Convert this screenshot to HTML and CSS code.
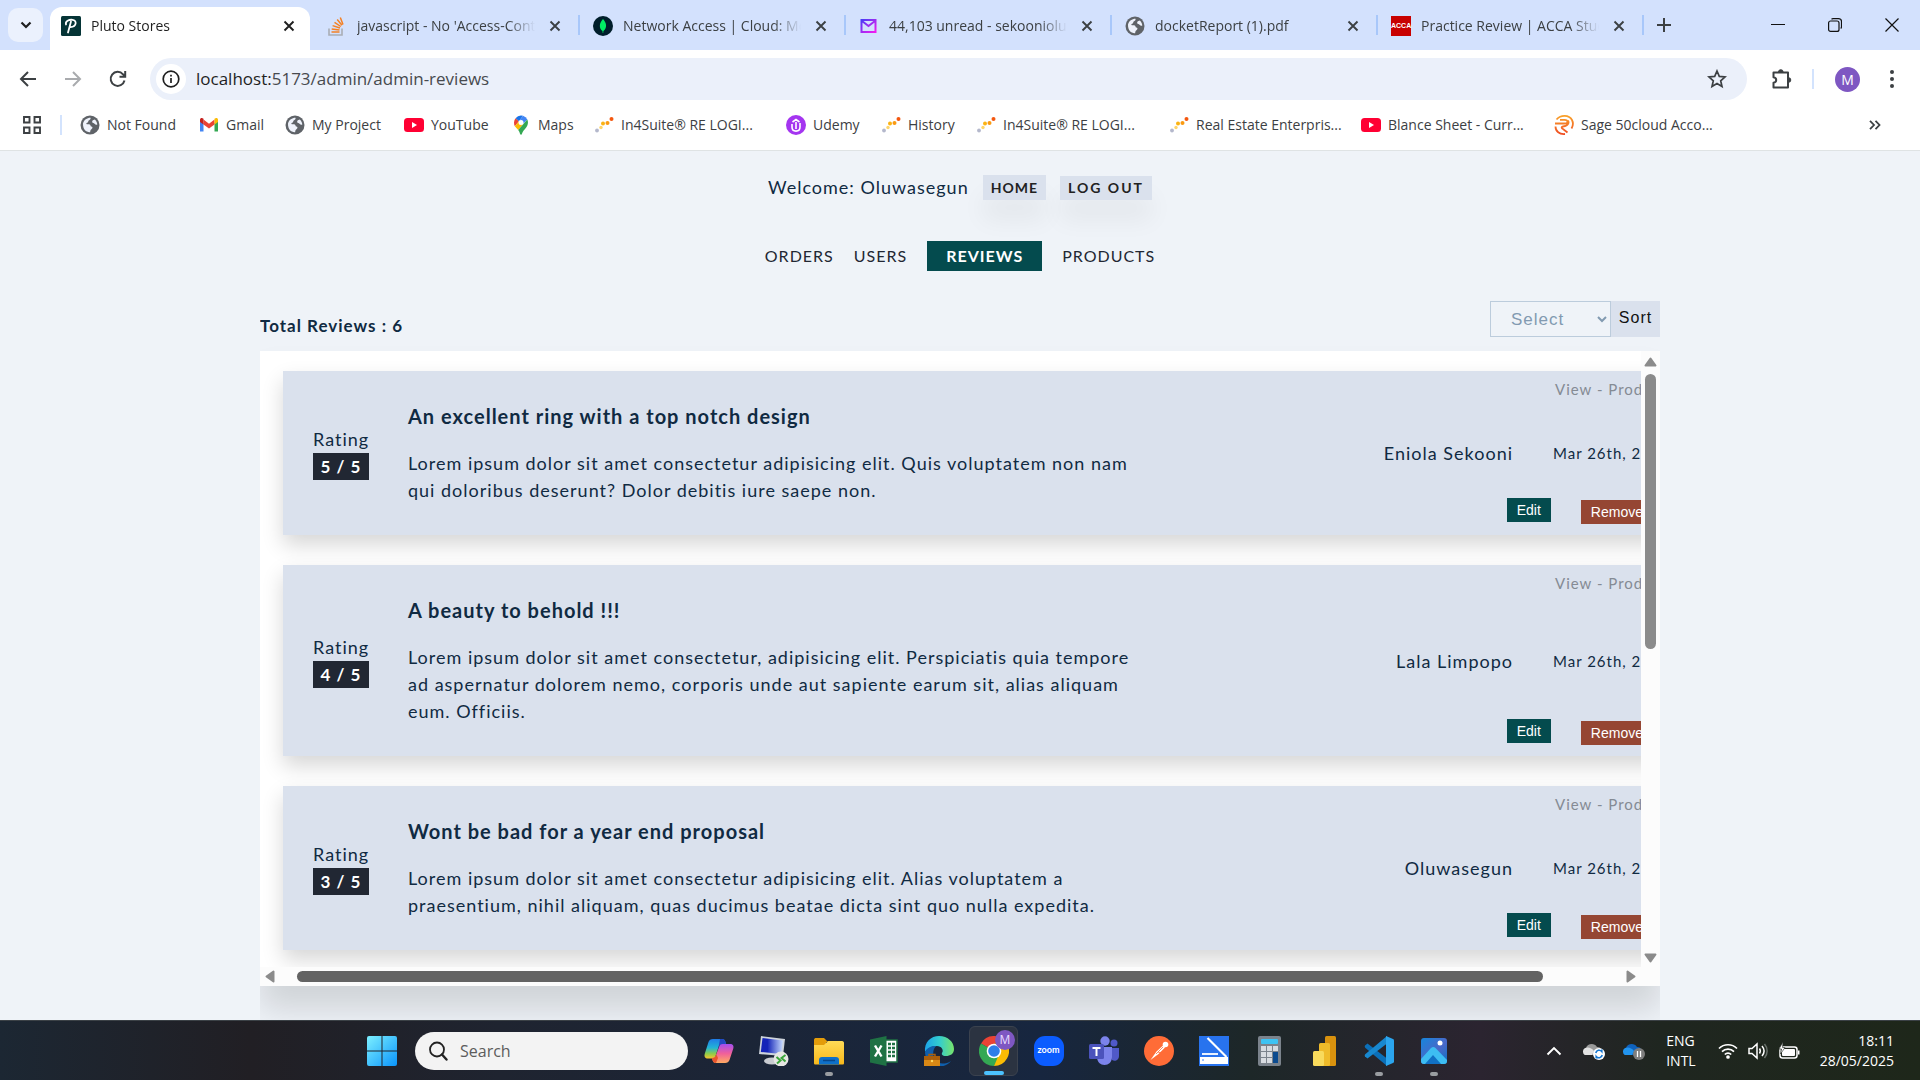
FILE: index.html
```html
<!DOCTYPE html>
<html lang="en">
<head>
<meta charset="utf-8">
<meta name="viewport" content="width=device-width, initial-scale=1">
<title>Pluto Stores</title>
<link rel="stylesheet" href="styles.css">
</head>
<body>
<svg class="defs" aria-hidden="true">
  <defs>
    <symbol id="close" viewBox="0 0 12 12"><path d="M1.5 1.5l9 9M10.500 1.500l-9 9" stroke="currentColor" stroke-width="1.900" fill="none"/></symbol>
    <symbol id="globe" viewBox="0 0 20 20"><circle cx="10" cy="10" r="9.500" fill="#5f6368"/><path d="M3 8.500C4 5 7 2.800 10.500 2.800c.5 1.700-.8 2.200-1.800 2.700-.7.400-.2 1.500-1 1.900-.8.300-1.500.5-1.300 1.300.3.900 2.300.2 3.300.7 1.300.6.500 1.800 1.600 2.200 1.200.4 1.500 1.200.8 2-.9 1-1.800 1.200-2 3.600-4 .2-7.300-3-7.100-8.700zM12.800 5.200l2-.6c1.400 1.300 2.300 3 2.500 4.900-.9.500-2.200 0-2.800-.8-.5-.8-1.900-.6-2.300-1.500-.2-.7 0-1.500.6-2z" fill="#eef2fb"/></symbol>
    <symbol id="youtube" viewBox="0 0 20 20"><rect y="3" width="20" height="14" rx="3.500" fill="#ff0033"/><path d="M8 7v6l5-3z" fill="#fff"/></symbol>
    <symbol id="dots" viewBox="0 0 20 20"><circle cx="3" cy="15.500" r="1.900" fill="#b4b8cc"/><circle cx="7" cy="12.500" r="1.700" fill="#ffd66b"/><circle cx="9" cy="8.500" r="2" fill="#fbb313"/><circle cx="13.500" cy="8" r="2" fill="#fa9a12"/><circle cx="17.500" cy="4" r="2" fill="#f4570f"/></symbol>
    <linearGradient id="win" x1="0" y1="0" x2="1" y2="1"><stop offset="0" stop-color="#7df0ff"/><stop offset="1" stop-color="#0a94fb"/></linearGradient>
    <linearGradient id="mail" x1="0" y1="0" x2="1" y2="1"><stop offset="0" stop-color="#4a3df5"/><stop offset="1" stop-color="#f31cf0"/></linearGradient>
    <linearGradient id="sage" x1="0" y1="0" x2="0" y2="1"><stop offset="0" stop-color="#f9a12a"/><stop offset="1" stop-color="#ef4d22"/></linearGradient>
    <linearGradient id="copA" x1="0" y1="0" x2="0" y2="1"><stop offset="0" stop-color="#1f7be8"/><stop offset=".45" stop-color="#22b4d6"/><stop offset=".75" stop-color="#8ccc4a"/><stop offset="1" stop-color="#f8c32c"/></linearGradient>
    <linearGradient id="copB" x1="0" y1="0" x2="0" y2="1"><stop offset="0" stop-color="#a24ef0"/><stop offset=".5" stop-color="#f0609a"/><stop offset="1" stop-color="#ffab62"/></linearGradient>
    <linearGradient id="scr" x1="0" y1="0" x2="1" y2="0"><stop offset=".3" stop-color="#1424b8"/><stop offset="1" stop-color="#c8dcff"/></linearGradient>
    <linearGradient id="edgeG" x1="0" y1="0" x2="1" y2="0"><stop offset="0" stop-color="#1ba3e8"/><stop offset=".5" stop-color="#33cdd0"/><stop offset="1" stop-color="#78e46a"/></linearGradient>
    <linearGradient id="photo" x1="0" y1="0" x2="1" y2="1"><stop offset="0" stop-color="#1686dc"/><stop offset=".55" stop-color="#4a68c8"/><stop offset="1" stop-color="#0b74c4"/></linearGradient>
    <linearGradient id="fold" x1="0" y1="0" x2="0" y2="1"><stop offset="0" stop-color="#ffdb57"/><stop offset="1" stop-color="#f8b81b"/></linearGradient>
  </defs>
</svg>

<div class="window">
  <header class="browser">
    <div class="tabstrip">
      <button class="tab-search" aria-label="Search tabs"><svg width="12" height="12" viewBox="0 0 12 12"><path d="M1.500 3.500L6 8l4.500-4.500" fill="none" stroke="#1f1f1f" stroke-width="2.200"/></svg></button>
      <div class="tabs">
        <div class="tab tab-active">
          <svg class="fav" viewBox="0 0 20 20"><rect width="20" height="20" rx="1.500" fill="#053436"/><path d="M5 8.500C4 5 8 3.500 11.500 3.800c4.500.3 4.500 7-2 7.400M10 5.500L7 16.500" fill="none" stroke="#fff" stroke-width="1.800" stroke-linecap="round"/></svg>
          <span class="tab-title">Pluto Stores</span>
          <button class="tab-close" aria-label="Close"><svg><use href="#close"/></svg></button>
        </div>
        <div class="tab">
          <svg class="fav" viewBox="0 0 20 20"><path d="M2 12.500V19h13v-6.500" fill="none" stroke="#a9adb5" stroke-width="1.600"/><path d="M4.500 16h8M4.700 13l7.800 1M5.600 9.600l7.400 2.400M7.500 6.300l6.300 4.200M10.200 3.500l4.800 5.800M13.300 1.500l2.700 7" stroke="#f48024" stroke-width="1.500"/></svg>
          <span class="tab-title">javascript - No 'Access-Control</span>
          <button class="tab-close" aria-label="Close"><svg><use href="#close"/></svg></button>
        </div>
        <div class="tab">
          <svg class="fav" viewBox="0 0 20 20"><circle cx="10" cy="10" r="10" fill="#001e2b"/><path d="M10 3c4.300 4.500 3.800 9.500.4 12l-.2 2h-.5l-.2-2C6 12.500 5.800 7.500 10 3z" fill="#00ed64"/></svg>
          <span class="tab-title">Network Access | Cloud: MongoDB</span>
          <button class="tab-close" aria-label="Close"><svg><use href="#close"/></svg></button>
        </div>
        <div class="tab">
          <svg class="fav" viewBox="0 0 20 20"><path d="M2.500 4h14v12h-14zM3 5l6.500 5L16 5" fill="none" stroke="url(#mail)" stroke-width="2"/></svg>
          <span class="tab-title">44,103 unread - sekooniolu@yahoo</span>
          <button class="tab-close" aria-label="Close"><svg><use href="#close"/></svg></button>
        </div>
        <div class="tab">
          <svg class="fav"><use href="#globe"/></svg>
          <span class="tab-title">docketReport (1).pdf</span>
          <button class="tab-close" aria-label="Close"><svg><use href="#close"/></svg></button>
        </div>
        <div class="tab">
          <span class="fav fav-acca">ACCA</span>
          <span class="tab-title">Practice Review | ACCA Study Hub</span>
          <button class="tab-close" aria-label="Close"><svg><use href="#close"/></svg></button>
        </div>
      </div>
      <button class="new-tab" aria-label="New tab"><svg width="14" height="14" viewBox="0 0 14 14"><path d="M7 0v14M0 7h14" stroke="#3c4043" stroke-width="2"/></svg></button>
      <div class="win-controls">
        <button aria-label="Minimize"><svg width="14" height="14" viewBox="0 0 14 14"><path d="M0 6.500h14" stroke="#111"/></svg></button>
        <button aria-label="Restore"><svg width="14" height="14" viewBox="0 0 14 14" fill="none" stroke="#111" stroke-width="1.200"><rect x=".6" y="3" width="10.400" height="10.400" rx="2"/><path d="M3.500 1.200C4 .8 4.500.6 5 .6h5.500a3 3 0 0 1 3 3V9c0 .6-.3 1-.8 1.500"/></svg></button>
        <button aria-label="Close window"><svg width="14" height="14" viewBox="0 0 14 14"><path d="M.5.5l13 13M13.500.5l-13 13" stroke="#111" stroke-width="1.200"/></svg></button>
      </div>
    </div>

    <div class="toolbar">
      <button class="tool" aria-label="Back"><svg width="18" height="18" viewBox="0 0 18 18" fill="none" stroke="#3c4043" stroke-width="2"><path d="M17 9H2.500M9 2L2 9l7 7"/></svg></button>
      <button class="tool" aria-label="Forward"><svg width="18" height="18" viewBox="0 0 18 18" fill="none" stroke="#a9abae" stroke-width="2"><path d="M1 9h14.500M9 2l7 7-7 7"/></svg></button>
      <button class="tool" aria-label="Reload"><svg width="18" height="18" viewBox="0 0 18 18" fill="none" stroke="#3c4043" stroke-width="2"><path d="M15.500 10.500A7 7 0 1 1 14 4.300l2 2M16.200 1v5.700h-5.700"/></svg></button>
      <div class="omnibox">
        <span class="site-info"><svg width="18" height="18" viewBox="0 0 18 18"><circle cx="9" cy="9" r="7.800" fill="none" stroke="#1f1f1f" stroke-width="1.700"/><path d="M9 8v5M9 4.800v1.800" stroke="#1f1f1f" stroke-width="1.700"/></svg></span>
        <span class="url"><b>localhost:</b>5173/admin/admin-reviews</span>
        <button class="star" aria-label="Bookmark"><svg width="20" height="20" viewBox="0 0 20 20"><path d="M10 2l2.300 5.400 5.800.5-4.400 3.900 1.300 5.700-5-3-5 3 1.300-5.700L1.900 7.900l5.800-.5z" fill="none" stroke="#3c4043" stroke-width="1.700"/></svg></button>
      </div>
      <button class="ext" aria-label="Extensions"><svg width="22" height="22" viewBox="0 0 22 22"><path d="M2.500 4.500h14.500v15H2.500v-4.700c3.600-.6 3.600-5 0-5.600z" fill="none" stroke="#3c4043" stroke-width="2" stroke-linejoin="round"/><path d="M7.500 4a2.300 2.300 0 0 1 4.600 0zM17.500 9.700a2.300 2.300 0 0 1 0 4.600z" fill="#3c4043" stroke="#3c4043"/></svg></button>
      <span class="divider"></span>
      <span class="avatar">M</span>
      <button class="menu" aria-label="Menu"><svg width="6" height="20" viewBox="0 0 6 20" fill="#3c4043"><circle cx="3" cy="3" r="2"/><circle cx="3" cy="10" r="2"/><circle cx="3" cy="17" r="2"/></svg></button>
    </div>

    <nav class="bookmarks" aria-label="Bookmarks">
      <svg width="18" height="18" viewBox="0 0 18 18" fill="none" stroke="#3c4043" stroke-width="1.900"><path d="M1 1h5.500v5.500H1zM11.500 1H17v5.500h-5.500zM1 11.500h5.500V17H1zM11.500 11.500H17V17h-5.500z"/></svg>
      <span class="divider"></span>
      <div class="bookmark-list">
        <a href="#"><svg><use href="#globe"/></svg>Not Found</a>
        <a href="#"><svg viewBox="0 0 20 20"><path d="M1 6v10.500h3.500V8z" fill="#4285f4"/><path d="M19 6v10.500h-3.500V8z" fill="#34a853"/><path d="M4.500 4.500v5L10 13.500l5.500-4v-5L10 8.700z" fill="#ea4335"/><path d="M1 5c0-2 2-2.500 3.500-1.200V9.500L1 7z" fill="#c5221f"/><path d="M19 5c0-2-2-2.500-3.500-1.200V9.500L19 7z" fill="#fbbc04"/></svg>Gmail</a>
        <a href="#"><svg><use href="#globe"/></svg>My Project</a>
        <a href="#"><svg><use href="#youtube"/></svg>YouTube</a>
        <a href="#"><svg viewBox="0 0 20 20"><path d="M3 7.500a7 7 0 0 1 1.600-4.200L8 6.200l-4.200 5A9 9 0 0 1 3 7.500z" fill="#ea4335"/><path d="M4.600 3.300A7 7 0 0 1 12 .8L8 6.200z" fill="#1a73e8"/><path d="M12 .8A7 7 0 0 1 16.300 4.500L12 9 8 6.200z" fill="#4285f4"/><path d="M3.800 11.200L8 6.200 12.200 9l-5 6z" fill="#fbbc04"/><path d="M16.300 4.500c1.300 3 .6 5.800-1.300 8.300-1.600 2-3.300 3.500-4 6-.3 1.400-1.600 1.400-2 0-.3-1.400-.9-2.600-1.800-3.800z" fill="#34a853"/><circle cx="10" cy="7.500" r="2.500" fill="#fff"/></svg>Maps</a>
        <a href="#"><svg><use href="#dots"/></svg>In4Suite® RE LOGI...</a>
        <a href="#"><svg viewBox="0 0 20 20"><circle cx="10" cy="10" r="10" fill="#a435f0"/><path d="M6 9v3c0 5.500 8 5.500 8 0V8M10 14V7M6.500 7L10 4.500 13.500 7" fill="none" stroke="#fff" stroke-width="1.600"/></svg>Udemy</a>
        <a href="#"><svg><use href="#dots"/></svg>History</a>
        <a href="#"><svg><use href="#dots"/></svg>In4Suite® RE LOGI...</a>
        <a href="#"><svg><use href="#dots"/></svg>Real Estate Enterpris...</a>
        <a href="#"><svg><use href="#youtube"/></svg>Blance Sheet - Curr...</a>
        <a href="#"><svg viewBox="0 0 20 20" fill="none" stroke="url(#sage)" stroke-width="1.800"><path d="M2.500 4.500C7-.5 15-.2 18 5c1.500 3 1 6-.5 8.500M1 8.500h9.500c4 0 4-3.700 0-3.700H6M1.500 11.500c0 5 4 8 9.500 7.500M14 5.500c2 4-2 5.500-5 6-2 .4-1.500 2 0 2.500l4.500 3.500"/></svg>Sage 50cloud Acco...</a>
      </div>
      <button class="more" aria-label="More bookmarks"><svg width="12" height="10" viewBox="0 0 12 10" fill="none" stroke="#3c4043" stroke-width="1.800"><path d="M1 .8L5 5 1 9.200M6.500.8l4 4.200-4 4.200"/></svg></button>
    </nav>
  </header>

  <main class="page">
    <div class="welcome">
      <p>Welcome: Oluwasegun</p>
      <a class="chip" href="#">HOME</a>
      <button class="chip chip-wide">LOG OUT</button>
    </div>
    <nav class="sections" aria-label="Admin">
      <a href="#">ORDERS</a>
      <a href="#">USERS</a>
      <a class="current" href="#">REVIEWS</a>
      <a href="#">PRODUCTS</a>
    </nav>

    <section class="reviews">
      <div class="reviews-head">
        <h1>Total Reviews : 6</h1>
        <form class="sort">
          <select aria-label="Sort by"><option>Select</option></select>
          <button type="button">Sort</button>
        </form>
      </div>
      <div class="panel">
        <div class="viewport">
          <div class="list">
            <article class="card">
              <a class="view" href="#">View - Product</a>
              <div class="rating"><span>Rating</span><strong>5 / 5</strong></div>
              <div class="body"><h2>An excellent ring with a top notch design</h2>
                <p>Lorem ipsum dolor sit amet consectetur adipisicing elit. Quis voluptatem non nam qui doloribus deserunt? Dolor debitis iure saepe non.</p></div>
              <span class="author">Eniola Sekooni</span>
              <time class="date">Mar 26th, 2025</time>
              <div class="actions"><button class="edit">Edit</button><button class="remove">Remove</button></div>
            </article>
            <article class="card">
              <a class="view" href="#">View - Product</a>
              <div class="rating"><span>Rating</span><strong>4 / 5</strong></div>
              <div class="body"><h2>A beauty to behold !!!</h2>
                <p>Lorem ipsum dolor sit amet consectetur, adipisicing elit. Perspiciatis quia tempore ad aspernatur dolorem nemo, corporis unde aut sapiente earum sit, alias aliquam eum. Officiis.</p></div>
              <span class="author">Lala Limpopo</span>
              <time class="date">Mar 26th, 2025</time>
              <div class="actions"><button class="edit">Edit</button><button class="remove">Remove</button></div>
            </article>
            <article class="card">
              <a class="view" href="#">View - Product</a>
              <div class="rating"><span>Rating</span><strong>3 / 5</strong></div>
              <div class="body"><h2>Wont be bad for a year end proposal</h2>
                <p>Lorem ipsum dolor sit amet consectetur adipisicing elit. Alias voluptatem a praesentium, nihil aliquam, quas ducimus beatae dicta sint quo nulla expedita.</p></div>
              <span class="author">Oluwasegun</span>
              <time class="date">Mar 26th, 2025</time>
              <div class="actions"><button class="edit">Edit</button><button class="remove">Remove</button></div>
            </article>
          </div>
        </div>
        <div class="vbar">
          <svg width="13" height="10" viewBox="0 0 13 10"><path d="M6.500 1.500L11.500 8.500h-10z" fill="#8b8b8b" stroke="#8b8b8b" stroke-width="2" stroke-linejoin="round"/></svg>
          <div class="track"><div class="thumb"></div></div>
          <svg width="13" height="10" viewBox="0 0 13 10"><path d="M6.500 8.500L11.500 1.500h-10z" fill="#8b8b8b" stroke="#8b8b8b" stroke-width="2" stroke-linejoin="round"/></svg>
        </div>
        <div class="hbar">
          <svg width="10" height="13" viewBox="0 0 10 13"><path d="M1.500 6.500L8.500 1.500v10z" fill="#8b8b8b" stroke="#8b8b8b" stroke-width="2" stroke-linejoin="round"/></svg>
          <div class="track"><div class="thumb"></div></div>
          <svg width="10" height="13" viewBox="0 0 10 13"><path d="M8.500 6.500L1.500 1.500v10z" fill="#8b8b8b" stroke="#8b8b8b" stroke-width="2" stroke-linejoin="round"/></svg>
        </div>
      </div>
    </section>
  </main>

  <footer class="taskbar">
    <div class="apps">
      <button class="app" aria-label="Start"><svg viewBox="0 0 30 30"><path d="M2 0h12.500v14.500H0V2a2 2 0 0 1 2-2zM15.500 0H28a2 2 0 0 1 2 2v12.500H15.500zM0 15.500h14.500V30H2a2 2 0 0 1-2-2zM15.500 15.500H30V28a2 2 0 0 1-2 2H15.500z" fill="url(#win)"/></svg></button>
      <label class="search"><svg width="20" height="20" viewBox="0 0 20 20"><circle cx="9" cy="8.500" r="7" fill="none" stroke="#222" stroke-width="1.800"/><path d="M14 13.500l4.500 5" stroke="#222" stroke-width="2.400" stroke-linecap="round"/></svg><input type="text" placeholder="Search" aria-label="Search"></label>
      <button class="app" aria-label="Copilot"><svg viewBox="0 0 30 30"><path d="M9 3h9c2 0 3 1 3.500 3L22 8h-4c-2 0-3 1-3.500 3l-3 9c-.7 2-1.500 2.500-3.500 2.500H4c-3 0-4-2-3.300-4.500L4.500 6C5.300 4 6.500 3 9 3z" fill="url(#copA)"/><path d="M16 3h2c2 0 3 1 3.500 3L22 8.500h-4c-2 0-3 1-3.500 3z" fill="#2349c4"/><path d="M21 27h-9c-2 0-3-1-3.500-3L8 22c2.500 0 3.500-1 4-3l3-8c.7-2 1.500-3 3.500-3H26c3 0 4 2 3.300 4.500L25.500 24c-.8 2-2 3-4.500 3z" fill="url(#copB)"/><path d="M8 22c2.500 0 3.500-1 4.500-3.500L14 22l-2 5c-2 0-3-1-3.500-3z" fill="#e8552c"/></svg></button>
      <button class="app" aria-label="Remote Desktop"><svg viewBox="0 0 30 30"><ellipse cx="13" cy="25" rx="8" ry="3.500" fill="#c9ccd1"/><path d="M2 0l24 3-2 17-24-2z" fill="#cdd3db"/><path d="M3.500 2l20.500 2.500-1.800 13.500-20.400-2z" fill="url(#scr)"/><circle cx="22" cy="23" r="7.500" fill="#e6e6e3"/><path d="M17.500 21l4 3.500-3.500 3M26.500 19l-4 3 4 3.500" fill="none" stroke="#3ba53a" stroke-width="2"/></svg></button>
      <button class="app running" aria-label="File Explorer"><svg viewBox="0 0 30 30"><path d="M0 4c0-1.500 1-2 2-2h8l4 4h-2v6H0z" fill="#e39c0a"/><path d="M0 9h10l4-4h14c1.500 0 2 1 2 2v20c0 1-.5 1.500-1.500 1.500h-27C.5 28.500 0 28 0 27z" fill="url(#fold)"/><path d="M5 28.500V24c0-2 1-3 3-3h14c2 0 3 1 3 3v4.500z" fill="#0f70c9"/><path d="M9 24.500h12" stroke="#07478c" stroke-width="1.500"/></svg></button>
      <button class="app" aria-label="Excel"><svg viewBox="0 0 30 30"><path d="M16 4h12v22H16z" fill="#fff" stroke="#1f7244" stroke-width="1.500"/><path d="M19 8h3M23 8h3M19 12h3M23 12h3M19 16h3M23 16h3M19 20h3M23 20h3" stroke="#1f7244" stroke-width="2.500"/><path d="M1 3.500L17.500 0v30L1 26.500z" fill="#1f7244"/><path d="M6 9.500l6.500 11M12.500 9.500L6 20.500" stroke="#fff" stroke-width="2.400"/></svg></button>
      <button class="app" aria-label="Edge"><svg viewBox="0 0 30 30"><path d="M1 16C0 6 7 0 15 0c9 0 15 6 15 13 0 5-4 7-8 7-4 0-5-2-3.500-4 1-2-1-6-5.500-6-6 0-10 3-12 6z" fill="url(#edgeG)"/><path d="M1 16c2-4 6-6.500 11-6-3 3-4 9-1 14 3 4 10 5 16 1-4 5-9 6-14 5C6 29 1 23 1 16z" fill="#0f5fad"/><rect y="20" width="16" height="10" fill="#d98815"/><path d="M0 20h16v4H0z" fill="#a95f0c"/><path d="M5 20v-1.500h6V20" fill="none" stroke="#a95f0c" stroke-width="1.500"/><circle cx="8" cy="25" r="1.200" fill="#ffd75e"/></svg></button>
      <button class="app app-active" aria-label="Chrome"><svg viewBox="0 0 30 30"><path d="M15 15L2 7.500A15 15 0 0 1 28 7.500H15z" fill="#ea4335"/><path d="M15 15L2 7.500A15 15 0 0 0 15 30l6.500-11.300z" fill="#34a853"/><path d="M15 15h6.500L15 30A15 15 0 0 0 28 7.500H15z" fill="#fbbc04"/><circle cx="15" cy="15" r="7.300" fill="#fff"/><circle cx="15" cy="15" r="5.800" fill="#2f7de9"/></svg><span class="badge">M</span></button>
      <button class="app" aria-label="Zoom"><span class="zoom">zoom</span></button>
      <button class="app" aria-label="Teams"><svg viewBox="0 0 30 30"><circle cx="25" cy="7" r="3.500" fill="#5059c9"/><path d="M20 12h10v8c0 4-4 6-7 4z" fill="#5059c9"/><circle cx="16" cy="5" r="4.700" fill="#7b83eb"/><path d="M8 11h15v10c0 5-3.500 8-7.500 8S8 26 8 21z" fill="#7b83eb"/><rect x="0" y="8" width="15" height="15" rx="1.500" fill="#4b53bc"/><path d="M3.500 12h8M7.500 12v8" stroke="#fff" stroke-width="2"/></svg></button>
      <button class="app" aria-label="Postman"><svg viewBox="0 0 30 30"><circle cx="15" cy="15" r="15" fill="#ff6c37"/><path d="M6.500 24l6-8.500 6.500-6 2 2-6.500 6.500z" fill="#fff"/><circle cx="21.500" cy="8.500" r="2.800" fill="#fff"/><path d="M14 16l3.500 1M12 18l7-7" stroke="#ff6c37" stroke-width=".8"/></svg></button>
      <button class="app" aria-label="Scanner"><svg viewBox="0 0 30 30"><rect width="30" height="30" fill="#2873ee"/><path d="M8.500 2l19 19" stroke="#fff" stroke-width="2.200"/><path d="M3 18h16" stroke="#fff" stroke-width="1.800"/><path d="M1 21h28v7H1z" fill="#fff"/><circle cx="4" cy="24" r=".8" fill="#2873ee"/></svg></button>
      <button class="app" aria-label="Calculator"><svg viewBox="0 0 30 30"><rect x="4" width="23" height="30" rx="2" fill="#7b838c"/><rect x="7" y="3" width="17" height="5" rx="1" fill="#3ec3f3"/><path d="M7 10h5v5H7zM13 10h5v5h-5zM19 10h5v5h-5zM7 16h5v5H7zM13 16h5v5h-5zM7 22h5v5H7zM13 22h5v5h-5z" fill="#d8dce1"/><path d="M19 16h5v11h-5z" fill="#0c4b8f"/></svg></button>
      <button class="app" aria-label="Power BI"><svg viewBox="0 0 30 30"><rect x="16" width="11" height="30" rx="1.500" fill="#d9920e"/><rect x="10" y="7" width="11" height="23" rx="1.500" fill="#efbb2a"/><rect x="4" y="15" width="11" height="15" rx="1.500" fill="#f8da5c"/></svg></button>
      <button class="app running" aria-label="VS Code"><svg viewBox="0 0 30 30"><path d="M1 9.500l2.500-2L23 22.500V30L1.500 12c-.8-.7-1-1.700-.5-2.500z" fill="#0b6fb8"/><path d="M1 20.500l2.500 2L23 7.500V0L1.500 18c-.8.700-1 1.700-.5 2.500z" fill="#1888cf"/><path d="M22 0l7 3c.6.300 1 .8 1 1.500v21c0 .7-.4 1.200-1 1.500l-7 3z" fill="#2ba5ee"/></svg></button>
      <button class="app running" aria-label="Photos"><svg viewBox="0 0 30 30"><rect x="2" y="2" width="26" height="26" rx="3" fill="url(#photo)"/><path d="M2 23l10-11c1.500-1.500 3-1.500 4.500 0L28 24v1c0 2-1 3-3 3H5c-2 0-3-1-3-3z" fill="#3dbdf2"/><path d="M6 28l8-9 8 9z" fill="#1170c4"/><circle cx="21" cy="7" r="2.500" fill="#fff"/></svg></button>
    </div>
    <div class="tray">
      <svg width="16" height="10" viewBox="0 0 16 10"><path d="M1.500 8.500L8 2l6.500 6.500" fill="none" stroke="#fff" stroke-width="1.900"/></svg>
      <svg class="cloud" width="24" height="18" viewBox="0 0 24 18"><path d="M3 13a4 4 0 0 1 1-7c1-4 8-6 11-1 4-.3 5 3 4 6l-6 2z" fill="#9a9a9a"/><path d="M3 13a4 4 0 0 1 0-7c3-1.500 7 0 9 3l-2 4z" fill="#e2e2e2"/><circle cx="17" cy="12" r="6" fill="#fff"/><path d="M13.800 11a3.400 3.400 0 0 1 6-1.500V7.500M20.200 13a3.400 3.400 0 0 1-6 1.500v2" fill="none" stroke="#1577d2" stroke-width="1.600"/></svg>
      <svg class="cloud" width="24" height="18" viewBox="0 0 24 18"><path d="M3 13a4 4 0 0 1 1-7c1-4 8-6 11-1 4-.3 5 3 4 6l-6 2z" fill="#0f62bd"/><path d="M3 13a4 4 0 0 1 0-7c3-1.500 7 0 9 3l-2 4z" fill="#2294ee"/><circle cx="17" cy="12" r="6" fill="#7e7e7e"/><path d="M15.500 9v6M18.500 9v6" stroke="#fff" stroke-width="1.300"/></svg>
      <span class="lang">ENG<br>INTL</span>
      <svg class="net" width="20" height="16" viewBox="0 0 20 16" fill="none" stroke="#fff" stroke-width="1.700"><path d="M1 5.500a12.700 12.700 0 0 1 18 0M4 8.700a8.500 8.500 0 0 1 12 0M6.800 11.500a4.500 4.500 0 0 1 6.400 0"/><circle cx="10" cy="14" r="1" fill="#fff"/></svg>
      <svg width="20" height="18" viewBox="0 0 20 18" fill="none" stroke="#fff" stroke-width="1.500"><path d="M1 6.500h3L9 2v14l-5-4.500H1zM11.500 6.500c1 1.500 1 3.500 0 5M14 4c2.500 3 2.500 7 0 10"/><path d="M16.500 2c3.500 4 3.500 10 0 14" stroke="#68706a"/></svg>
      <svg width="22" height="18" viewBox="0 0 22 18"><rect x="2" y="5" width="17" height="11" rx="2.500" fill="none" stroke="#fff" stroke-width="1.500"/><rect x="4" y="7" width="13" height="7" rx="1" fill="#fff"/><path d="M20 8.500h1.500v4H20z" fill="#fff"/><path d="M5 0L1 7h2.500L2.500 12 7 5.500H4.500z" fill="#fff" stroke="#1f2620" stroke-width=".6"/></svg>
      <span class="clock">18:11<br>28/05/2025</span>
    </div>
  </footer>
</div>
</body>
</html>
```
FILE: styles.css
```css
* { box-sizing: border-box; }

body {
  margin: 0;
  font-family: "Open Sans", "Noto Sans", sans-serif;
  color: #3c4043;
}

button { font: inherit; border: 0; background: none; padding: 0; }
a { color: inherit; text-decoration: none; }
h1, h2, p { margin: 0; }
svg { display: block; flex: none; }
.defs { width: 0; height: 0; position: absolute; }

.window { display: flex; flex-direction: column; height: 100vh; overflow: hidden; }

/* Browser frame */
.browser { flex: none; background: #fff; border-bottom: 1px solid #dfe3e4; }

.tabstrip { display: flex; align-items: center; height: 50px; background: #d3e1fd; padding-left: 8px; }
.tab-search {
  width: 35px; height: 34px; border-radius: 10px; background: #ebf1fd;
  display: grid; place-items: center; flex: none; margin-right: 7px;
}
.tabs { display: flex; flex: 0 1 1596px; min-width: 0; align-self: stretch; padding-top: 7px; }
.tab { flex: 1 1 0; min-width: 0; display: flex; align-items: center; gap: 10px; padding: 0 17px 6px 11px; position: relative; }
.tab-active { background: #fff; border-radius: 12px 12px 0 0; margin-right: 6px; padding-right: 11px; color: #1f1f1f; }
.tab:not(.tab-active)::after {
  content: ""; position: absolute; right: 2px; top: 8px; width: 2px; height: 20px; background: #a8c7fa;
}
.fav { width: 20px; height: 20px; flex: none; }
.fav-acca {
  background: #c80000; color: #fff; font: 700 7px/20px "Liberation Sans", sans-serif; text-align: center;
}
.tab-title {
  flex: 1; min-width: 0; overflow: hidden; white-space: nowrap; font-size: 14px; line-height: 22px;
  -webkit-mask-image: linear-gradient(to right, #000 calc(100% - 28px), transparent);
  mask-image: linear-gradient(to right, #000 calc(100% - 28px), transparent);
}
.tab-close { width: 12px; height: 12px; margin: 0 4px; flex: none; color: inherit; }
.tab-close svg { width: 12px; height: 12px; }
.new-tab { margin: 0 11px; display: grid; place-items: center; padding-bottom: 1px; }
.win-controls { display: flex; margin-left: auto; }
.win-controls button { width: 57px; height: 48px; display: grid; place-items: center; }

.toolbar { display: flex; align-items: center; height: 58px; padding: 0 12px 0 5px; }
.tool { width: 45px; height: 40px; display: grid; place-items: center; }
.omnibox {
  flex: 1; height: 42px; margin-left: 10px; padding: 0 20px 0 6px; border-radius: 21px;
  background: #ebf0fa; display: flex; align-items: center;
}
.site-info { width: 30px; height: 30px; border-radius: 50%; background: #fff; display: grid; place-items: center; }
.url { flex: 1; margin-left: 10px; font-size: 17px; line-height: 24px; color: #474a4e; }
.url b { font-weight: 400; color: #1f1f1f; }
.ext { margin-left: 24px; }
.divider { width: 2px; height: 20px; background: #d3e3fd; flex: none; }
.toolbar .divider { margin: 0 21px 0 19px; }
.avatar {
  width: 25px; height: 25px; border-radius: 50%; background: #7e57c2; color: #fff;
  font-size: 14px; line-height: 25px; text-align: center;
}
.menu { width: 24px; display: grid; place-items: center; margin: 0 4px 0 20px; }

.bookmarks { display: flex; align-items: center; height: 42px; padding: 0 39px 8px 23px; }
.bookmarks .divider { margin: 0 18px 0 19px; }
.bookmark-list {
  flex: 1; min-width: 0; overflow: hidden; display: grid;
  grid-template-columns: 119px 86px 119px 107px 83px 192px 95px 95px 193px 192px 193px auto;
}
.bookmark-list a { display: flex; align-items: center; gap: 7px; font-size: 14px; line-height: 20px; white-space: nowrap; }
.bookmark-list svg { width: 20px; height: 20px; }

/* Store admin */
.page {
  flex: 1; min-height: 0; display: flex; flex-direction: column;
  background: #eff3f8; color: #102a42;
  font-family: Lato, "Open Sans", sans-serif; font-size: 18px; letter-spacing: 1px;
}
.welcome { display: flex; justify-content: center; align-items: center; gap: 14px; padding-top: 24px; line-height: 25px; }
.chip {
  background: #dae1ed; color: #222; font-size: 14px; font-weight: 700; line-height: 25px; padding: 0 8px;
  letter-spacing: 1px; box-shadow: 0 20px 25px rgba(0, 0, 0, .05);
}
.chip-wide { letter-spacing: 2px; line-height: 24px; }
.sections { display: flex; justify-content: center; align-items: center; gap: 20px; margin-top: 41px; font-size: 16px; line-height: 30px; color: #222733; }
.sections .current { background: #044b4e; color: #fff; font-weight: 700; padding: 0 19px; }

.reviews {
  flex: 1; min-height: 0; width: calc(100% - 40px); max-width: 1400px; margin: 30px auto 0;
  overflow: hidden; display: flex; flex-direction: column; padding-bottom: 34px;
}
.reviews-head { display: flex; justify-content: space-between; align-items: flex-start; }
.reviews-head h1 { font-size: 17px; line-height: 26px; margin-top: 12px; }
.sort { display: flex; height: 36px; margin-bottom: 14px; font-family: "Liberation Sans", Arial, sans-serif; }
.sort select {
  width: 121px; padding: 0 0 0 16px; border: 1px solid #bcccdc; border-radius: 0; background: transparent;
  color: #829ab1; font: 17px "Liberation Sans", Arial, sans-serif; letter-spacing: 1px;
}
.sort button { width: 49px; background: #dae1ed; color: #111; font-size: 16px; letter-spacing: 1px; padding-bottom: 2px; }

.panel {
  flex: 1; min-height: 0; display: grid; grid-template: minmax(0, 1fr) 19px / minmax(0, 1fr) 19px;
  background: #fcfcfc; box-shadow: 0 24px 30px rgba(0, 0, 0, .13);
}
.viewport { overflow: hidden; background: #fff; }
.list { display: flex; flex-direction: column; gap: 30px; padding: 20px 0 0 23px; margin-right: -46px; }
.card {
  display: grid; grid-template: auto 1fr auto / 56px 727px 1fr 104px;
  background: #dae1ed; padding: 0 30px; box-shadow: 0 10px 20px rgba(0, 0, 0, .16);
}
.rating, .body, .author, .date { grid-row: 1 / 4; align-self: center; }
.view { grid-area: 1 / 4; font-size: 15px; line-height: 20px; margin-top: 8px; padding-left: 2px; color: #858b94; white-space: nowrap; }
.rating { grid-column: 1; text-align: center; line-height: 27px; }
.rating span, .rating strong { display: block; }
.rating strong { background: #212733; color: #fff; font-size: 17px; }
.body { grid-column: 2; margin-left: 39px; margin-right: -39px; padding: 32px 0 31px; }
.body h2 { font-size: 20px; line-height: 27px; margin-bottom: 20px; }
.body p { line-height: 27px; }
.author { grid-column: 3; justify-self: end; margin-right: 40px; }
.date { grid-column: 4; font-size: 15px; white-space: nowrap; }
.actions { grid-area: 3 / 3 / 4 / 5; justify-self: end; display: flex; gap: 30px; margin: 0 4px 11px 0; align-items: flex-end; }
.actions button { height: 24px; padding: 0 10px; color: #fff; font: 14px "Liberation Sans", Arial, sans-serif; }
.actions .edit { background: #044b4e; margin-bottom: 2px; }
.actions .remove { background: #954633; }

.vbar { display: flex; flex-direction: column; align-items: center; justify-content: space-between; padding: 6px 0 4px; }
.vbar .track { flex: 1; margin: 7px 0; width: 11px; }
.vbar .thumb { height: 48%; border-radius: 6px; background: #8b8b8b; }
.hbar { display: flex; align-items: center; padding: 0 5px; }
.hbar .track { flex: 1; padding: 0 83px 0 22px; height: 11px; }
.hbar .thumb { height: 11px; border-radius: 6px; background: #636363; }

/* Desktop taskbar */
.taskbar {
  flex: none; height: 60px; display: flex; align-items: center; justify-content: space-between;
  padding: 0 26px 0 354px; border-top: 1px solid #3b4146;
  background: linear-gradient(to right, #1c2733 0, #211f24 250px, #1f2430 500px, #17263f 1040px, #1d2728 1250px, #2b2430 1480px, #1f2620 1660px, #1e271a);
}
.apps { display: flex; align-items: center; }
.app { width: 55px; height: 58px; display: grid; place-items: center; position: relative; flex: none; }
.app svg { width: 30px; height: 30px; }
.search {
  width: 273px; height: 38px; margin-left: 6px; margin-right: 3px; padding: 0 13px; border-radius: 19px;
  background: #f3f3f3; display: flex; align-items: center; gap: 12px;
}
.search input {
  border: 0; background: none; outline: 0; padding: 0; min-width: 0; flex: 1;
  font: 16px "Open Sans", "Noto Sans", sans-serif;
}
.search input::placeholder { color: #5c5c5c; }
.running::after, .app-active::after {
  content: ""; position: absolute; left: 50%; bottom: 4px; width: 8px; height: 4px; margin-left: -4px;
  border-radius: 2px; background: #9a9da1;
}
.app-active { background: #2b3341; border-radius: 6px; border: 1px solid #3b424e; width: 49px; height: 50px; margin: 0 3px; }
.app-active::after { width: 20px; margin-left: -10px; bottom: 0; background: #4cc2ff; }
.badge {
  position: absolute; right: 2px; top: 3px; width: 20px; height: 20px; border-radius: 50%;
  background: #7e57c2; color: #e8dcff; font-size: 12px; line-height: 20px;
}
.zoom {
  width: 30px; height: 30px; border-radius: 11px; background: #0b5cff; color: #fff;
  font: 700 9px/28px Lato, sans-serif;
}
.tray { display: flex; align-items: center; color: #fff; font-size: 14px; line-height: 20px; }
.cloud { margin-left: 20px; }
.cloud + .cloud { margin-left: 16px; }
.lang { margin: 0 22px 0 20px; }
.net + svg { margin: 0 10px; }
.clock { text-align: right; margin-left: 20px; }
```
